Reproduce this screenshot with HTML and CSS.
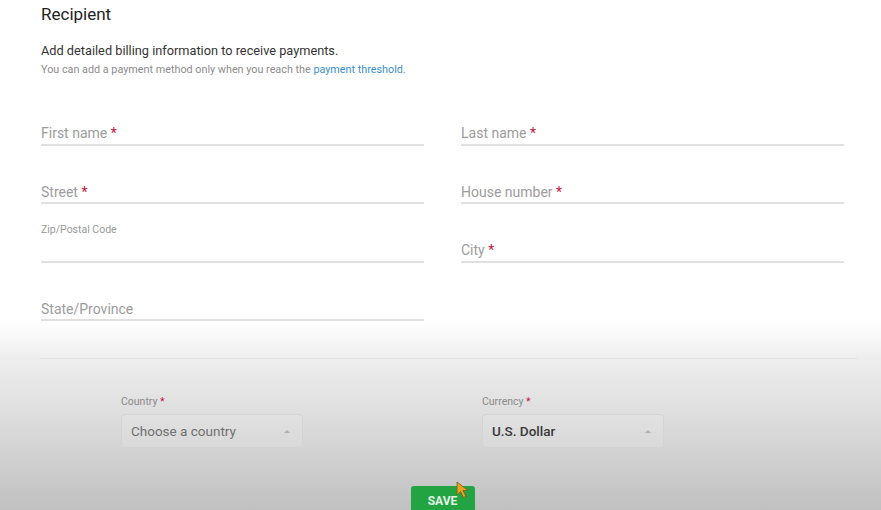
FILE: index.html
```html
<!DOCTYPE html>
<html>
<head>
<meta charset="utf-8">
<link rel="stylesheet" href="styles.css">
</head>
<body>
<div class="page">
  <h1 class="title">Recipient</h1>
  <p class="lead">Add detailed billing information to receive payments.</p>
  <p class="note">You can add a payment method only when you reach the <a class="link">payment threshold</a>.</p>

  <div class="form-grid">
    <div class="field"><span class="label">First name <span class="req">*</span></span></div>
    <div class="field"><span class="label">Last name <span class="req">*</span></span></div>
    <div class="field"><span class="label">Street <span class="req">*</span></span></div>
    <div class="field"><span class="label">House number <span class="req">*</span></span></div>
    <div class="field"><span class="label-small">Zip/Postal Code</span><div class="input"></div></div>
    <div class="field"><span class="label">City <span class="req">*</span></span></div>
    <div class="field"><span class="label">State/Province</span></div>
    <div class="empty"></div>
  </div>

  <hr class="sep">

  <div class="selects">
    <div class="sel-field">
      <span class="sel-label">Country <span class="req">*</span></span>
      <div class="select"><span class="placeholder">Choose a country</span><span class="caret"></span></div>
    </div>
    <div class="sel-field">
      <span class="sel-label">Currency <span class="req">*</span></span>
      <div class="select"><span class="value">U.S. Dollar</span><span class="caret"></span></div>
    </div>
  </div>

  <div class="actions"><div class="save">SAVE</div></div>
</div>
<svg class="cursor" width="16" height="18" viewBox="0 0 16 18">
  <path d="M1 1 L1 14 L4.5 10.5 L7.5 16.5 L10 15.3 L7 9.5 L12 9.5 Z" fill="#e9a21f" stroke="#7a5a20" stroke-width="0.8" stroke-linejoin="round"/>
</svg>
</body>
</html>
```

FILE: styles.css
```css
html {
  height: 100%;
  background: linear-gradient(to bottom, #ffffff 0px, #ffffff 318px, #f8f8f8 338px, #ededed 360px, #e2e2e2 400px, #d3d3d3 450px, #c0c0c0 510px);
}
body {
  margin: 0;
  height: 100%;
  font-family: Roboto, "Liberation Sans", Arial, sans-serif;
  position: relative;
  overflow: hidden;
}
.page {
  padding-left: 41px;
}
.title {
  margin: 4px 0 0;
  font-size: 17px;
  line-height: 20px;
  font-weight: 400;
  color: #222;
}
.lead {
  margin: 18.5px 0 0;
  font-size: 12.75px;
  line-height: 15px;
  color: #333;
}
.note {
  margin: 5.5px 0 0;
  font-size: 10.8px;
  line-height: 13px;
  color: #8c8c8c;
}
.link {
  color: #3b8ed4;
  text-decoration: none;
}
.form-grid {
  margin-top: 11px;
  display: grid;
  grid-template-columns: 383px 383px;
  column-gap: 37px;
  grid-auto-rows: 58.5px;
}
.field {
  box-sizing: border-box;
  border-bottom: 2px solid #e0e0e0;
  display: flex;
  flex-direction: column;
  justify-content: flex-end;
  padding-bottom: 2.5px;
}
.label {
  font-size: 14px;
  line-height: 16px;
  color: #9c9c9c;
}
.req {
  color: #c8143c;
}
.label-small {
  font-size: 10.5px;
  line-height: 13px;
  color: #999;
}
.input {
  height: 22px;
}
.sep {
  margin: 37px 0 0 -1px;
  width: 817px;
  border: 0;
  border-top: 1px solid #e2e2e2;
  height: 0;
}
.selects {
  margin-top: 36px;
  padding-left: 80px;
  display: grid;
  grid-template-columns: 182px 182px;
  column-gap: 179px;
}
.sel-field {
  display: flex;
  flex-direction: column;
  gap: 6px;
}
.sel-label {
  font-size: 10.5px;
  line-height: 13px;
  color: #8a8a8a;
}
.select {
  box-sizing: border-box;
  height: 34px;
  border: 1px solid #d3d3d3;
  border-radius: 4px;
  background: rgba(255, 255, 255, 0.12);
  display: flex;
  align-items: center;
  justify-content: space-between;
  padding: 0 12px 0 9px;
  font-size: 13.5px;
}
.placeholder {
  color: #707070;
}
.value {
  color: #3a3a3a;
  font-weight: 500;
}
.caret {
  width: 0;
  height: 0;
  border-left: 3px solid transparent;
  border-right: 3px solid transparent;
  border-bottom: 3px solid #b0b0b0;
}
.actions {
  margin: 38px 0 0 -41px;
  padding-left: 4px;
  display: flex;
  justify-content: center;
}
.save {
  box-sizing: border-box;
  width: 64px;
  height: 34px;
  border-radius: 3px;
  background: #22a443;
  color: #e4f3e6;
  font-size: 12px;
  font-weight: 700;
  line-height: 14px;
  padding-top: 8px;
  text-align: center;
}
.cursor {
  position: absolute;
  left: 456px;
  top: 481px;
}
```
